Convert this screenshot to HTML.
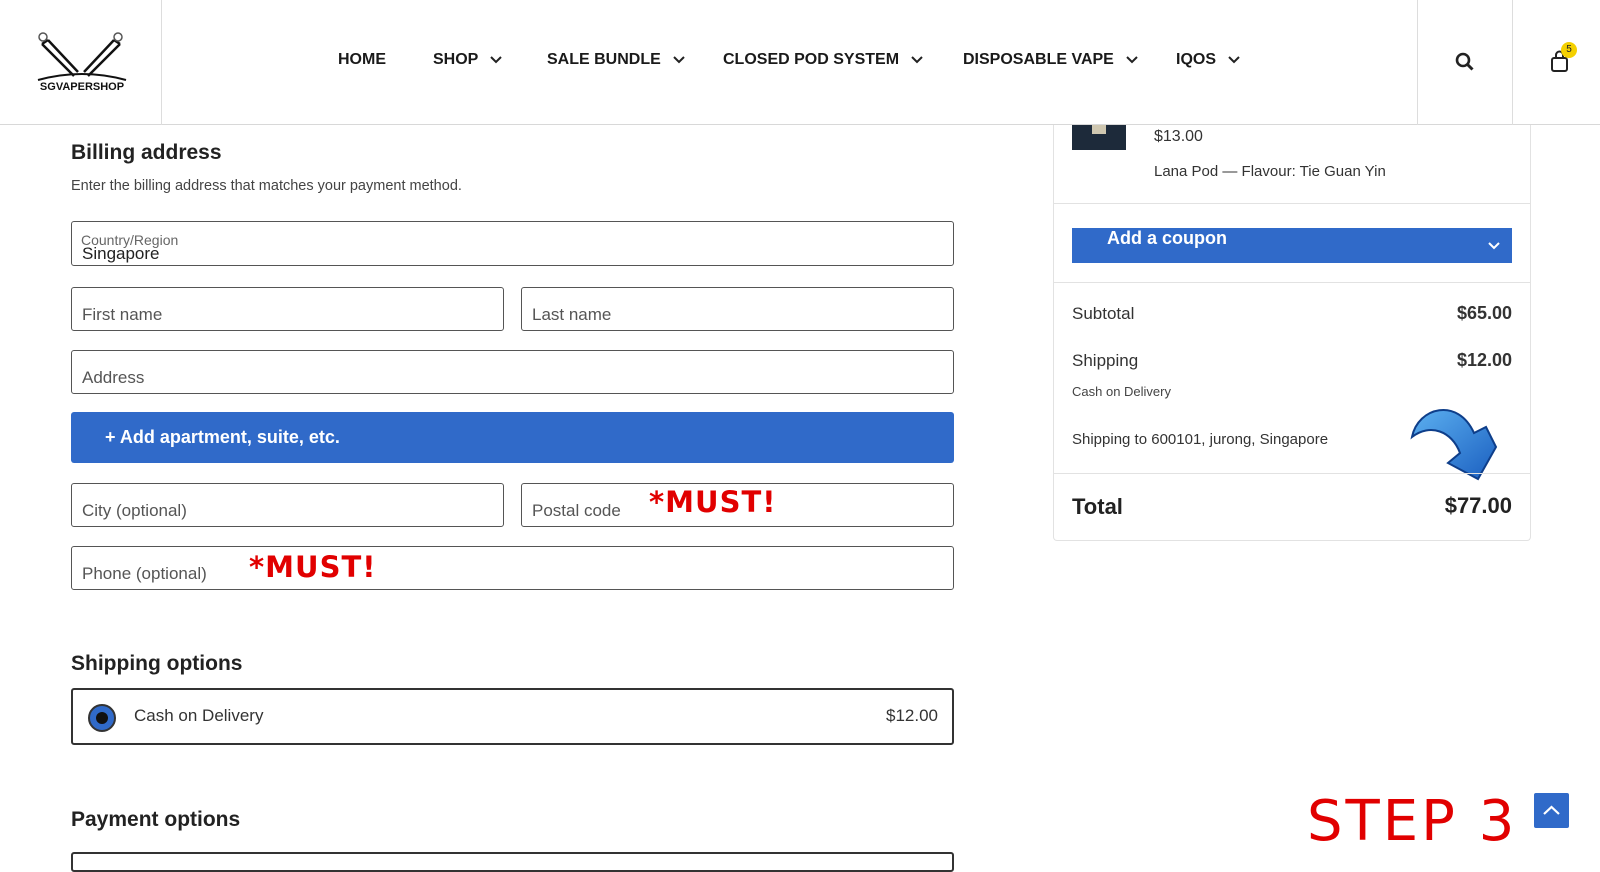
<!DOCTYPE html>
<html><head><meta charset="utf-8"><style>
*{box-sizing:border-box;margin:0;padding:0}
body{width:1600px;height:861px;overflow:hidden;background:#fff;font-family:"Liberation Sans",sans-serif;color:#222;position:relative}
.a{position:absolute}
.hdr{left:0;top:0;width:1600px;height:125px;border-bottom:1px solid #d8d8d8;background:#fff;z-index:5}
.nav{top:51px;font-size:16px;font-weight:bold;color:#1a1a1a;white-space:nowrap;z-index:6}
.nav svg{vertical-align:middle;margin-left:12px}
.vl{top:0;width:1px;height:125px;background:#ddd;z-index:6}
.box{border:1px solid #555;border-radius:3px;background:#fff}
.ph{font-size:17px;color:#555;position:absolute;left:10px;bottom:5px}
.h{font-size:21px;font-weight:bold;color:#222}
.must{color:#e10000;font-weight:bold;font-size:29px;letter-spacing:1px;font-family:"DejaVu Sans",sans-serif}
.r{font-size:16px;color:#333}
</style></head><body>
<div class="a hdr"></div>
<svg class="a" style="left:34px;top:30px;z-index:6" width="96" height="64" viewBox="0 0 96 64">
<g fill="none" stroke="#111" stroke-width="2.5">
<path d="M8 14 L40 46"/><path d="M14 10 L44 42"/><path d="M8 14 L14 10"/>
<path d="M86 14 L54 46"/><path d="M80 10 L50 42"/><path d="M86 14 L80 10"/>
<circle cx="9" cy="7" r="4" stroke-width="1.5" stroke="#555"/><circle cx="84" cy="7" r="4" stroke-width="1.5" stroke="#555"/>
<path d="M4 50 Q48 38 92 50" stroke-width="2"/></g>
<text x="48" y="60" font-size="11" font-weight="bold" text-anchor="middle" font-family="Liberation Sans" fill="#111">SGVAPERSHOP</text></svg>
<div class="a vl" style="left:161px"></div>
<div class="a vl" style="left:1417px"></div>
<div class="a vl" style="left:1512px"></div>
<div class="a nav" style="left:338px">HOME</div>
<div class="a nav" style="left:433px">SHOP<svg width="12" height="8"><path d="M1 1l5 5 5-5" stroke="#222" stroke-width="2" fill="none"/></svg></div>
<div class="a nav" style="left:547px">SALE BUNDLE<svg width="12" height="8"><path d="M1 1l5 5 5-5" stroke="#222" stroke-width="2" fill="none"/></svg></div>
<div class="a nav" style="left:723px">CLOSED POD SYSTEM<svg width="12" height="8"><path d="M1 1l5 5 5-5" stroke="#222" stroke-width="2" fill="none"/></svg></div>
<div class="a nav" style="left:963px">DISPOSABLE VAPE<svg width="12" height="8"><path d="M1 1l5 5 5-5" stroke="#222" stroke-width="2" fill="none"/></svg></div>
<div class="a nav" style="left:1176px">IQOS<svg width="12" height="8"><path d="M1 1l5 5 5-5" stroke="#222" stroke-width="2" fill="none"/></svg></div>
<svg class="a" style="left:1455px;top:52px;z-index:6" width="20" height="20"><circle cx="8" cy="8" r="6" stroke="#222" stroke-width="2.6" fill="none"/><path d="M12.5 12.5l5 5" stroke="#222" stroke-width="3"/></svg>
<svg class="a" style="left:1550px;top:50px;z-index:6" width="20" height="24"><rect x="2" y="8" width="15" height="13" rx="2" stroke="#222" stroke-width="2" fill="none"/><path d="M6 9V5a3.5 3.5 0 0 1 7 0v4" stroke="#222" stroke-width="2" fill="none"/></svg>
<div class="a" style="left:1561px;top:42px;width:16px;height:16px;border-radius:50%;background:#f4d000;font-size:10px;text-align:center;line-height:16px;color:#222;z-index:7">5</div>

<div class="a h" style="left:71px;top:141px">Billing address</div>
<div class="a" style="left:71px;top:178px;font-size:14.5px;color:#444">Enter the billing address that matches your payment method.</div>
<div class="a box" style="left:71px;top:221px;width:883px;height:45px"><div class="a" style="left:9px;top:10px;font-size:14px;color:#666">Country/Region</div><div class="a" style="left:10px;top:22px;font-size:17px;color:#222">Singapore</div></div>
<div class="a box" style="left:71px;top:287px;width:433px;height:44px"><span class="ph">First name</span></div>
<div class="a box" style="left:521px;top:287px;width:433px;height:44px"><span class="ph">Last name</span></div>
<div class="a box" style="left:71px;top:350px;width:883px;height:44px"><span class="ph">Address</span></div>
<div class="a" style="left:71px;top:412px;width:883px;height:51px;background:#306ac9;border-radius:3px;color:#fff;font-size:18px;font-weight:bold;line-height:51px;padding-left:34px">+ Add apartment, suite, etc.</div>
<div class="a box" style="left:71px;top:483px;width:433px;height:44px"><span class="ph">City (optional)</span></div>
<div class="a box" style="left:521px;top:483px;width:433px;height:44px"><span class="ph">Postal code</span></div>
<div class="a must" style="left:649px;top:485px">*MUST!</div>
<div class="a box" style="left:71px;top:546px;width:883px;height:44px"><span class="ph">Phone (optional)</span></div>
<div class="a must" style="left:249px;top:550px">*MUST!</div>

<div class="a h" style="left:71px;top:652px">Shipping options</div>
<div class="a" style="left:71px;top:688px;width:883px;height:57px;border:2px solid #333;border-radius:3px">
<div class="a" style="left:15px;top:14px;width:28px;height:28px;border-radius:50%;background:#306ac9;border:2px solid #333"><div class="a" style="left:6px;top:6px;width:12px;height:12px;border-radius:50%;background:#111"></div></div>
<div class="a" style="left:61px;top:16px;font-size:17px;color:#333">Cash on Delivery</div>
<div class="a" style="right:14px;top:16px;font-size:17px;color:#333">$12.00</div></div>
<div class="a h" style="left:71px;top:808px">Payment options</div>
<div class="a" style="left:71px;top:852px;width:883px;height:20px;border:2px solid #333;border-radius:3px"></div>

<div class="a" style="left:1053px;top:110px;width:478px;height:431px;border:1px solid #e2e2e2;border-top:none;border-radius:0 0 4px 4px"></div>
<div class="a" style="left:1072px;top:118px;width:54px;height:32px;background:#1d2a3a"><div class="a" style="left:20px;top:6px;width:14px;height:10px;background:#cfc7b0"></div></div>
<div class="a r" style="left:1154px;top:128px">$13.00</div>
<div class="a r" style="left:1154px;top:163px;font-size:15px">Lana Pod — Flavour: Tie Guan Yin</div>
<div class="a" style="left:1054px;top:203px;width:476px;height:1px;background:#e2e2e2"></div>
<div class="a" style="left:1072px;top:228px;width:440px;height:35px;background:#306ac9;color:#fff;font-size:18px;font-weight:bold;padding-left:35px;line-height:20px">Add a coupon<svg class="a" style="right:12px;top:14px" width="12" height="8"><path d="M1 1l5 5 5-5" stroke="#fff" stroke-width="2" fill="none"/></svg></div>
<div class="a" style="left:1054px;top:282px;width:476px;height:1px;background:#e2e2e2"></div>
<div class="a" style="left:1072px;top:304px;font-size:17px;color:#333">Subtotal</div>
<div class="a" style="left:1420px;top:303px;width:92px;text-align:right;font-size:18px;font-weight:bold;color:#333">$65.00</div>
<div class="a" style="left:1072px;top:351px;font-size:17px;color:#333">Shipping</div>
<div class="a" style="left:1420px;top:350px;width:92px;text-align:right;font-size:18px;font-weight:bold;color:#333">$12.00</div>
<div class="a" style="left:1072px;top:384px;font-size:13px;color:#444">Cash on Delivery</div>
<div class="a" style="left:1072px;top:431px;font-size:15px;color:#333">Shipping to 600101, jurong, Singapore</div>
<svg class="a" style="left:1408px;top:403px" width="100" height="84" viewBox="0 0 100 84">
<defs><linearGradient id="g" x1="0" y1="0" x2="1" y2="1"><stop offset="0" stop-color="#5cb0f0"/><stop offset="1" stop-color="#1b5fc0"/></linearGradient></defs>
<path d="M4 34 C10 4 50 -6 66 30 L78 24 L88 44 L70 76 L40 60 L52 50 C44 28 22 20 4 34 Z" fill="url(#g)" stroke="#0e3e8a" stroke-width="2"/></svg>
<div class="a" style="left:1054px;top:473px;width:476px;height:1px;background:#e2e2e2"></div>
<div class="a" style="left:1072px;top:494px;font-size:22px;font-weight:bold;color:#222">Total</div>
<div class="a" style="left:1400px;top:493px;width:112px;text-align:right;font-size:22px;font-weight:bold;color:#222">$77.00</div>

<div class="a" style="left:1307px;top:790px;font-size:56px;color:#e10000;letter-spacing:3px;font-family:'DejaVu Sans',sans-serif;line-height:64px">STEP 3</div>
<div class="a" style="left:1534px;top:793px;width:35px;height:35px;background:#306ac9;border-radius:2px"><svg class="a" style="left:9px;top:12px" width="17" height="11"><path d="M1 9l7.5-7 7.5 7" stroke="#fff" stroke-width="2.2" fill="none"/></svg></div>
</body></html>
